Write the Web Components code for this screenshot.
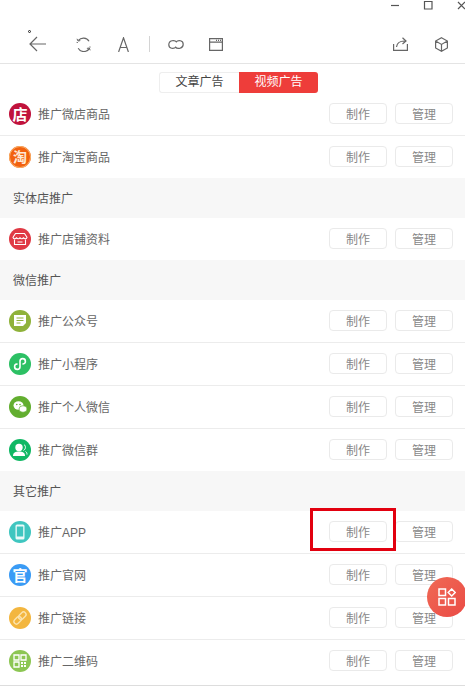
<!DOCTYPE html>
<html lang="zh">
<head>
<meta charset="utf-8">
<style>
  html, body { margin: 0; height: 100%; background: #fff; overflow: hidden; }
  body { font-family: "Liberation Sans", "Noto Sans CJK SC", sans-serif; font-size: 12px; }
</style>
</head>
<body>
<app-shell>
  <window-bar></window-bar>
  <tool-bar></tool-bar>
  <tab-switch></tab-switch>
  <promo-row icon="shop" bg="#c0123c">推广微店商品</promo-row>
  <promo-row icon="taobao" bg="#f2610f" flat>推广淘宝商品</promo-row>
  <promo-section>实体店推广</promo-section>
  <promo-row icon="store" bg="#e03a45" flat>推广店铺资料</promo-row>
  <promo-section>微信推广</promo-section>
  <promo-row icon="account" bg="#8fb23a">推广公众号</promo-row>
  <promo-row icon="mini" bg="#2cc064">推广小程序</promo-row>
  <promo-row icon="wechat" bg="#62ae2f">推广个人微信</promo-row>
  <promo-row icon="group" bg="#10b864" flat>推广微信群</promo-row>
  <promo-section>其它推广</promo-section>
  <promo-row icon="phone" bg="#3fc6c0">推广APP</promo-row>
  <promo-row icon="site" bg="#3a9bf5">推广官网</promo-row>
  <promo-row icon="link" bg="#f3b63f">推广链接</promo-row>
  <promo-row icon="qr" bg="#8cc653" last>推广二维码</promo-row>
  <float-button></float-button>
  <red-mark></red-mark>
</app-shell>
<script>
const stroke = 'fill="none" stroke="#666" stroke-width="1.2"';

class AppShell extends HTMLElement {
  constructor() {
    super();
    this.attachShadow({ mode: "open" }).innerHTML = `
      <style>
        :host { display: flex; flex-direction: column; position: relative; width: 465px; height: 687px; overflow: hidden; background: #fff; }
      </style>
      <slot></slot>`;
  }
}

class WindowBar extends HTMLElement {
  constructor() {
    super();
    this.attachShadow({ mode: "open" }).innerHTML = `
      <style>
        :host { display: block; height: 12px; }
        svg { display: block; }
      </style>
      <svg width="465" height="12" ${stroke.replace("#666", "#555")}>
        <path d="M391 5.5h8"/>
        <path d="M424.5 1.5h7.5v7.5h-7.5z"/>
        <path d="M458 2l7 7M465 2l-7 7"/>
      </svg>`;
  }
}

class ToolBar extends HTMLElement {
  constructor() {
    super();
    this.attachShadow({ mode: "open" }).innerHTML = `
      <style>
        :host { display: flex; align-items: center; height: 52px; box-sizing: border-box; border-bottom: 1px solid #e4e4e4; padding: 13px 17px 0 29px; }
        svg { display: block; flex: none; }
        .dot { position: absolute; left: 28px; top: 30px; width: 1px; height: 1px; border: 1px solid #222; border-radius: 50%; }
        .sep { width: 1px; height: 16px; background: #d4d4d4; margin: 0 18px 0 20px; }
        .push { flex: 1; }
      </style>
      <span class="dot"></span>
      <svg width="17" height="16" ${stroke} style="margin-right:30px"><path d="M8 1L1 8l7 7M1 8h16"/></svg>
      <svg width="15" height="15" ${stroke} style="margin-right:27px"><path d="M2.400 3.400A6.500 6.500 0 0 1 13 4.200M13.600 11.100A6.500 6.500 0 0 1 2.200 11.200M1.200 6A6.500 6.500 0 0 1 1.400 5M14 9.500A6.500 6.500 0 0 1 13.800 10.500"/><path d="M1 1.800l1 2.200 2.300-.4M14.200 13.300l-1-2.300-2.300.4" stroke-width="1"/></svg>
      <svg width="11" height="15" ${stroke}><path d="M.6 15L5.500 .8 10.400 15M2 10.500h7"/></svg>
      <span class="sep"></span>
      <svg width="16" height="11" ${stroke} style="margin-right:25px"><path d="M8.800 3C6.500 .6 .8 1.200 .8 5.800c0 4 5 4.600 7.400 2"/><path d="M7.200 8C9.500 10.400 15.200 9.800 15.200 5.200c0-4-5-4.600-7.400-2"/></svg>
      <svg width="14" height="13" ${stroke}><path d="M.6 .6h12.800v11.800H.6zM.6 4.200h12.800M7 2.400h1M9 2.400h1M11 2.400h1"/></svg>
      <span class="push"></span>
      <svg width="15" height="14" ${stroke} style="margin-right:27px"><path d="M.6 7v6.400h13.800V7"/><path d="M3.500 10c.5-4 3.500-6 8-6M9.500 .8L13 4l-3.500 3"/></svg>
      <svg width="13" height="15" ${stroke}><path d="M6.500 .7L12.400 4v7L6.500 14.300 .6 11V4zM.6 4l5.900 3.400L12.400 4M6.500 7.400v6.900"/></svg>`;
  }
}

class TabSwitch extends HTMLElement {
  constructor() {
    super();
    this.attachShadow({ mode: "open" }).innerHTML = `
      <style>
        :host { display: flex; justify-content: center; align-items: flex-start; height: 29px; padding: 8px 0 0 12px; box-sizing: border-box; flex: none; }
        span { width: 80px; height: 21px; line-height: 21px; text-align: center; box-sizing: border-box; font-size: 12px; flex: none; }
        .off { color: #444; border: 1px solid #eee; border-right: 0; border-radius: 3px 0 0 3px; line-height: 19px; }
        .on { color: #fff; background: #ee3d3a; border-radius: 0 3px 3px 0; width: 79px; }
      </style>
      <span class="off">文章广告</span><span class="on">视频广告</span>`;
  }
}

const glyphs = {
  shop: '<text x="11" y="16.500" text-anchor="middle" font-size="15" font-weight="700" fill="#fff">店</text>',
  taobao: '<circle cx="11" cy="11" r="10.500" fill="none" stroke="#f9b36b" stroke-width="1"/><text x="11" y="16" text-anchor="middle" font-size="14" font-weight="700" fill="#ffe9d6">淘</text>',
  store: '<path d="M6.500 5.500h9l2.500 3.800c-.5 2-3 2-3.500 0-.5 2-3 2-3.500 0-.5 2-3 2-3.500 0-.5 2-3 2-3.500 0z" fill="none" stroke="#fff" stroke-width="1.100"/><path d="M5.500 11.500v5h11v-5M8.500 14h5" fill="none" stroke="#fff" stroke-width="1.100"/>',
  account: '<path d="M5 5h12v11H5z" fill="#fff"/><path d="M7.500 8h7M7.500 10.500h7M7.500 13h4" stroke="#8fb23a" stroke-width="1.200"/><path d="M14 16l3-3v3z" fill="#8fb23a"/>',
  mini: '<path d="M8 11a2.700 2.700 0 1 0 3 2.700V8.300a2.700 2.700 0 1 1 3 2.700" fill="none" stroke="#fff" stroke-width="1.600" stroke-linecap="round"/>',
  wechat: '<ellipse cx="9.500" cy="9.500" rx="5" ry="4.200" fill="#fff"/><ellipse cx="14" cy="13" rx="4" ry="3.300" fill="#fff" stroke="#62ae2f" stroke-width=".7"/><circle cx="7.800" cy="8.500" r=".8" fill="#62ae2f"/><circle cx="11" cy="8.500" r=".8" fill="#62ae2f"/>',
  group: '<circle cx="10" cy="8.500" r="3.700" fill="#fff"/><path d="M4 17c0-3.500 2.500-4.500 6-4.500s6 1 6 4.500z" fill="#fff"/><path d="M15 5.500c2 1.500 2 4.500-.5 6M16.500 12.500c1 .5 1.500 1.500 1.500 3" fill="none" stroke="#fff"/>',
  phone: '<rect x="6.500" y="3.500" width="9" height="15" rx="1.500" fill="#fff" fill-opacity=".9"/><rect x="7.800" y="5.500" width="6.400" height="10" fill="#3fc6c0"/>',
  site: '<text x="11" y="16.500" text-anchor="middle" font-size="15" font-weight="700" fill="#fff">官</text>',
  link: '<g transform="rotate(-45 11 11)" fill="none" stroke="#fbe3ad" stroke-width="1.400"><rect x="3.500" y="8.500" width="8.500" height="5" rx="2.500"/><rect x="10" y="8.500" width="8.500" height="5" rx="2.500"/></g>',
  qr: '<path d="M5 5h5v5H5zM12 5h5v5h-5zM5 12h5v5H5z" fill="none" stroke="#fff" stroke-width="1.300"/><path d="M12 12h2v2h-2zM15 12h2v2h-2zM12 15h2v2h-2zM15 15h2v2h-2z" fill="#fff"/>'
};

class PromoRow extends HTMLElement {
  constructor() {
    super();
    const icon = this.getAttribute("icon");
    this.attachShadow({ mode: "open" }).innerHTML = `
      <style>
        :host { display: flex; align-items: center; flex: none; height: 43px; box-sizing: border-box; padding: 0 12px 0 9px; border-bottom: 1px solid #ececec; color: #666; font-size: 12px; }
        :host([flat]) { border-bottom: 0; height: 42px; }
        :host([last]) { height: 46px; padding-bottom: 3px; border-bottom: 1px solid #ddd; }
        svg { display: block; flex: none; margin-right: 7px; }
        .name { flex: 1; padding-bottom: 2px; }
        button { font: inherit; width: 58px; height: 21px; padding: 0; margin: 0 0 1px 8px; background: #fff; color: #888; border: 1px solid #eaeaea; border-radius: 4px; }
      </style>
      <svg width="22" height="22" viewBox="0 0 22 22"><circle cx="11" cy="11" r="11" fill="${this.getAttribute("bg")}"/>${glyphs[icon]}</svg>
      <span class="name"><slot></slot></span>
      <button>制作</button><button>管理</button>`;
  }
}

class PromoSection extends HTMLElement {
  constructor() {
    super();
    this.attachShadow({ mode: "open" }).innerHTML = `
      <style>
        :host { display: flex; align-items: center; flex: none; height: 40px; box-sizing: border-box; padding: 0 0 2px 13px; background: #f7f7f7; color: #555; font-size: 12px; }
      </style>
      <slot></slot>`;
  }
}

class FloatButton extends HTMLElement {
  constructor() {
    super();
    this.attachShadow({ mode: "open" }).innerHTML = `
      <style>
        :host { position: absolute; left: 427px; top: 577px; width: 40px; height: 40px; border-radius: 50%; background: linear-gradient(135deg, #f06a55, #ea4a45); display: flex; align-items: center; justify-content: center; }
      </style>
      <svg width="18" height="18" fill="none" stroke="#fff" stroke-width="1.500">
        <path d="M1 1h6.500v6.500H1zM1 10.500h6.500V17H1zM10.500 10.500H17V17h-6.500zM13.700 1l3.500 3.500-3.500 3.500-3.500-3.500z"/>
      </svg>`;
  }
}

class RedMark extends HTMLElement {
  constructor() {
    super();
    this.attachShadow({ mode: "open" }).innerHTML = `
      <style>
        :host { position: absolute; left: 310px; top: 508px; width: 86px; height: 43px; box-sizing: border-box; border: 3px solid #e2000f; }
      </style>`;
  }
}

customElements.define("app-shell", AppShell);
customElements.define("window-bar", WindowBar);
customElements.define("tool-bar", ToolBar);
customElements.define("tab-switch", TabSwitch);
customElements.define("promo-row", PromoRow);
customElements.define("promo-section", PromoSection);
customElements.define("float-button", FloatButton);
customElements.define("red-mark", RedMark);
</script>
</body>
</html>
